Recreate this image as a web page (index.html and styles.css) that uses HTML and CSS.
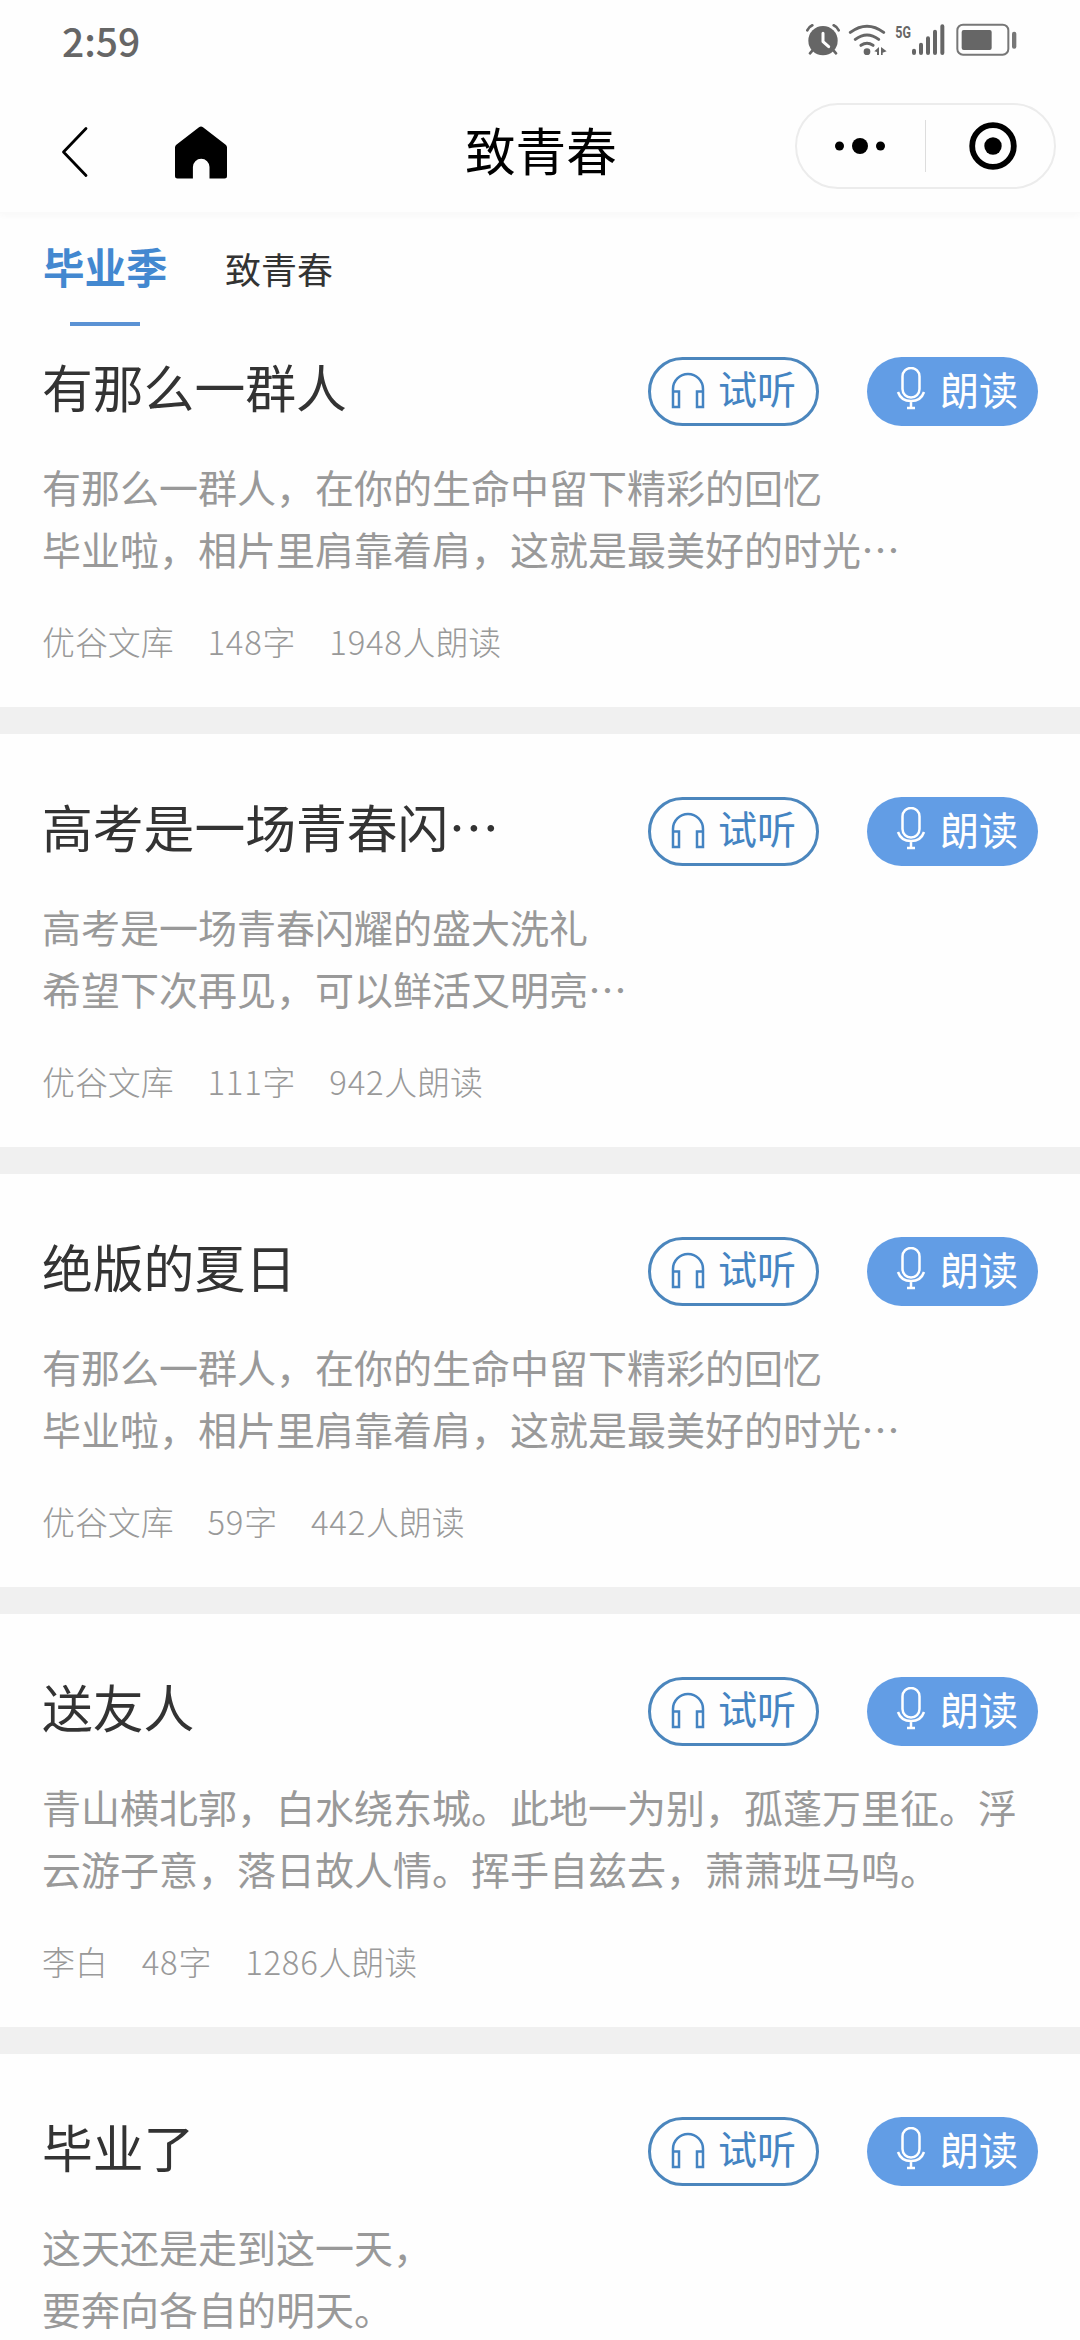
FILE: index.html
```html
<!DOCTYPE html>
<html lang="zh-CN">
<head>
<meta charset="utf-8">
<title>致青春</title>
<link rel="stylesheet" href="styles.css">
</head>
<body>
<svg class="defs" aria-hidden="true">
  <symbol id="headphones" viewBox="0 0 34 37">
    <path d="M2 20V17a15 15 0 0 1 30 0V20M2 19.500h6v15.500H2zM26 19.500h6v15.500h-6z" fill="none" stroke="currentColor" stroke-width="2.500"/>
  </symbol>
  <symbol id="mic" viewBox="0 0 30 43">
    <path d="M6.500 9.500a8.500 8.500 0 0 1 17 0V22a8.500 8.500 0 0 1-17 0zM2 25c2 6 7 9 13 9s11-3 13-9M15 34v6M11 41h8" fill="none" stroke="currentColor" stroke-width="2.500"/>
  </symbol>
</svg>

<header class="statusbar">
  <span class="time">2:59</span>
  <div class="status-icons">
    <svg width="34" height="33" viewBox="78 70 102 99">
      <circle cx="129" cy="123" r="44" fill="#666"/>
      <path d="M82 92q4-10 15-15M176 92q-4-10-15-15M97 153l-7 8M161 153l7 8" fill="none" stroke="#666" stroke-width="8" stroke-linecap="round"/>
      <path d="M129 101v25l17 15" fill="none" stroke="#fff" stroke-width="9" stroke-linecap="round" stroke-linejoin="round"/>
    </svg>
    <svg width="39" height="33" viewBox="204 70 117 99">
      <path d="M211 98q50-37 100 0M226 119q35-26 70 0M243 137q18-12 36 0" fill="none" stroke="#666" stroke-width="9" stroke-linecap="round"/>
      <circle cx="261" cy="156" r="10" fill="#666"/>
      <path d="M283 155l14-13v24h-6v-9zM303 142l17 13-12 4v7h-5z" fill="#666"/>
    </svg>
    <svg width="50" height="33" viewBox="345 70 150 99">
      <text class="net" x="346" y="115" textLength="47" lengthAdjust="spacingAndGlyphs">5G</text>
      <path d="M402 153v7M423 135v25M444 116v44M465 96v64M487 80v80" stroke="#666" stroke-width="12" stroke-linecap="round"/>
    </svg>
    <svg class="battery" width="61" height="33" viewBox="528 70 183 99">
      <rect x="532" y="75" width="153" height="90" rx="17" fill="none" stroke="#777" stroke-width="6"/>
      <rect x="545" y="91" width="90" height="60" rx="6" fill="#666"/>
      <rect x="696" y="96" width="13" height="51" rx="6" fill="#777"/>
    </svg>
  </div>
</header>

<nav class="navbar">
  <svg class="back" width="28" height="52" viewBox="0 0 28 52"><path d="M25 2.500L2.500 26 25 49.500" fill="none" stroke="#000" stroke-width="2.800" stroke-linecap="round" stroke-linejoin="round"/></svg>
  <svg class="home" width="52" height="53" viewBox="0 0 52 53"><path d="M24 1.200q2-1.500 4 0L51 19q1 1 1 2.500V50q0 2.500-2.500 2.500H34.500V41a8.300 8.300 0 0 0-16.600 0V52.500H2.500Q0 52.500 0 50V21.500Q0 20 1 19z"/></svg>
  <h1 class="page-title">致青春</h1>
  <div class="capsule">
    <svg width="52" height="50" viewBox="0 0 52 50"><circle cx="5.500" cy="25" r="4.500"/><circle cx="26" cy="25" r="8"/><circle cx="46.500" cy="25" r="4.500"/></svg>
    <i class="capsule-line"></i>
    <svg width="50" height="50" viewBox="0 0 50 50"><circle cx="25" cy="25" r="20.800" fill="none" stroke="#000" stroke-width="5.800"/><circle cx="25" cy="25" r="8.700"/></svg>
  </div>
</nav>

<div class="tabs">
  <a class="tab active">毕业季</a>
  <a class="tab">致青春</a>
</div>

<main class="list">
  <article class="card">
    <div class="card-head"><h2 class="card-title">有那么一群人</h2><a class="btn listen"><svg class="ico-listen"><use href="#headphones"/></svg><span>试听</span></a><a class="btn read"><svg class="ico-read"><use href="#mic"/></svg><span>朗读</span></a></div>
    <p class="excerpt">有那么一群人，在你的生命中留下精彩的回忆<br>毕业啦，相片里肩靠着肩，这就是最美好的时光…</p>
    <div class="meta"><span>优谷文库</span><span><b>148</b>字</span><span><b>1948</b>人朗读</span></div>
  </article>
  <article class="card">
    <div class="card-head"><h2 class="card-title">高考是一场青春闪…</h2><a class="btn listen"><svg class="ico-listen"><use href="#headphones"/></svg><span>试听</span></a><a class="btn read"><svg class="ico-read"><use href="#mic"/></svg><span>朗读</span></a></div>
    <p class="excerpt">高考是一场青春闪耀的盛大洗礼<br>希望下次再见，可以鲜活又明亮…</p>
    <div class="meta"><span>优谷文库</span><span><b>111</b>字</span><span><b>942</b>人朗读</span></div>
  </article>
  <article class="card">
    <div class="card-head"><h2 class="card-title">绝版的夏日</h2><a class="btn listen"><svg class="ico-listen"><use href="#headphones"/></svg><span>试听</span></a><a class="btn read"><svg class="ico-read"><use href="#mic"/></svg><span>朗读</span></a></div>
    <p class="excerpt">有那么一群人，在你的生命中留下精彩的回忆<br>毕业啦，相片里肩靠着肩，这就是最美好的时光…</p>
    <div class="meta"><span>优谷文库</span><span><b>59</b>字</span><span><b>442</b>人朗读</span></div>
  </article>
  <article class="card">
    <div class="card-head"><h2 class="card-title">送友人</h2><a class="btn listen"><svg class="ico-listen"><use href="#headphones"/></svg><span>试听</span></a><a class="btn read"><svg class="ico-read"><use href="#mic"/></svg><span>朗读</span></a></div>
    <p class="excerpt">青山横北郭，白水绕东城。此地一为别，孤蓬万里征。浮<br>云游子意，落日故人情。挥手自兹去，萧萧班马鸣。</p>
    <div class="meta"><span>李白</span><span><b>48</b>字</span><span><b>1286</b>人朗读</span></div>
  </article>
  <article class="card">
    <div class="card-head"><h2 class="card-title">毕业了</h2><a class="btn listen"><svg class="ico-listen"><use href="#headphones"/></svg><span>试听</span></a><a class="btn read"><svg class="ico-read"><use href="#mic"/></svg><span>朗读</span></a></div>
    <p class="excerpt">这天还是走到这一天，<br>要奔向各自的明天。</p>
  </article>
</main>
</body>
</html>
```
FILE: styles.css
```css
* { box-sizing: border-box; }
html, body { height: 2340px; overflow: hidden; }
body {
  margin: 0;
  width: 1080px;
  background: #fefefe;
  color: #333;
  font-family: "Noto Sans CJK SC", sans-serif;
}
h1, h2, p { margin: 0; font-weight: 400; }
.defs { position: absolute; width: 0; height: 0; }

.statusbar {
  height: 83px;
  padding: 0 63px 4px 62px;
  display: flex;
  justify-content: space-between;
  align-items: center;
}
.time { font-size: 39px; line-height: 78px; font-weight: 500; color: #666; }
.status-icons { display: flex; gap: 8px; }
.battery { margin-left: 3px; }
.net { font: 700 52px "Roboto", sans-serif; fill: #666; }

.navbar {
  height: 130px;
  padding: 0 24px 0 61px;
  display: flex;
  align-items: center;
  border-bottom: 1px solid #fafafa;
  box-shadow: 0 3px 5px #f9f9f9;
}
.back { margin-top: 9px; }
.home { margin: 9px 0 0 86px; }
.page-title { margin: 3px 0 0 238px; font-size: 50.600px; line-height: 76px; color: #000; }
.capsule {
  margin: -4px 0 0 auto;
  width: 261px;
  height: 86px;
  padding: 0 36px 0 37px;
  border: 2px solid #ececec;
  border-radius: 43px;
  display: flex;
  align-items: center;
  justify-content: space-between;
}
.capsule-line { width: 1px; height: 52px; background: #ddd; margin-right: 3px; }

.tabs { height: 114px; padding-left: 43px; display: flex; }
.tab { width: 124px; padding-top: 25px; font-size: 36px; line-height: 60px; white-space: nowrap; }
.active { font-size: 41.500px; line-height: 56px; font-weight: 700; color: #4388d0; margin-right: 58px; }
.active::after { content: ""; display: block; width: 70px; height: 4px; margin: 28px auto 0; background: #5b92d4; }

.card { height: 440px; padding: 63px 42px 0 43px; border-bottom: 27px solid #f0f0f0; }
.card:first-child { height: 407px; padding-top: 30px; }
.card:last-child { height: 286px; border: 0; }
.card-head { display: flex; height: 69px; align-items: center; }
.card-title { flex: 1; font-size: 50.800px; line-height: 69px; margin: -10px 0 0 -1px; white-space: nowrap; }
.btn {
  width: 171px;
  height: 69px;
  border-radius: 35px;
  display: flex;
  align-items: center;
  font-size: 39px;
  line-height: 54px;
  white-space: nowrap;
}
.listen { border: 3px solid #4b86bd; color: #4484c2; padding-left: 20px; }
.read { margin-left: 48px; background: #629de5; color: #fff; padding-left: 29px; }
.ico-listen { width: 34px; height: 37px; margin: -2px 13px 0 0; }
.listen span { margin-top: -9px; }
.ico-read { width: 30px; height: 43px; margin: -7px 14px 0 0; }
.read span { margin-top: -7px; }
.excerpt { margin: 29px 0 0 -1px; font-size: 39px; line-height: 62px; color: #999; white-space: nowrap; }
.meta { margin: 39px 0 0 -1px; display: flex; gap: 34px; font-size: 32.900px; line-height: 46px; font-weight: 300; color: #999; }
.meta b { font-weight: 300; letter-spacing: .7px; }
```
